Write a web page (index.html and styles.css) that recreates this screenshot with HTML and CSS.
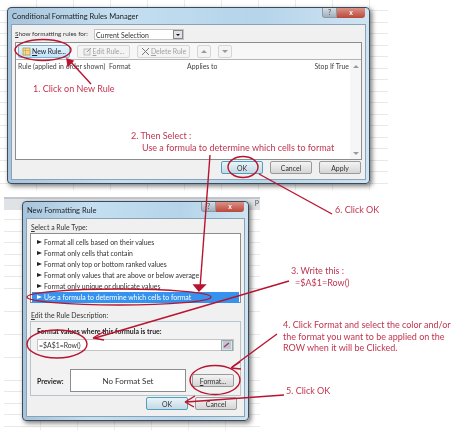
FILE: index.html
```html
<!DOCTYPE html>
<html lang="en">
<head>
  <meta charset="UTF-8">
  <title>Conditional Formatting</title>
  <link rel="stylesheet" href="styles.css">
</head>
<body>
  <div class="canvas">
    <div class="sheet sheet-top"></div>
    <div class="sheet sheet-bottom"><div class="col-bar"><span>P</span></div></div>

    <!-- Rules manager -->
    <div class="window manager">
      <div class="titlebar">
        <span class="title">Conditional Formatting Rules Manager</span>
        <div class="caption">
          <span class="help">?</span>
          <span class="close">x</span>
        </div>
      </div>
      <div class="client">
        <div class="show-row">
          <span class="show-label"><u>S</u>how formatting rules for:</span>
          <div class="select">
            <span>Current Selection</span>
            <i class="drop"></i>
          </div>
        </div>
        <div class="rules">
          <div class="toolbar">
            <button class="btn btn-hot">
              <svg width="9" height="9" viewBox="0 0 9 9"><rect x="1" y="1" width="7" height="7" fill="#f6dc8a" stroke="#b58d3a" stroke-width=".7"/><path d="M1 3.5h7M3.5 1v7" stroke="#c99f4c" stroke-width=".6"/></svg>
              <span><u>N</u>ew Rule...</span>
            </button>
            <button class="btn btn-off">
              <svg width="9" height="9" viewBox="0 0 9 9"><rect x="1" y="2" width="6" height="6" fill="#eee" stroke="#aaa" stroke-width=".7"/><path d="M4 5l4-4" stroke="#999"/></svg>
              <span><u>E</u>dit Rule...</span>
            </button>
            <button class="btn btn-off">
              <svg width="9" height="9" viewBox="0 0 9 9"><path d="M1 1l7 7M8 1L1 8" stroke="#777" stroke-width="1"/></svg>
              <span><u>D</u>elete Rule</span>
            </button>
            <button class="btn btn-off btn-arrow"><i class="tri tri-up"></i></button>
            <button class="btn btn-off btn-arrow"><i class="tri tri-down"></i></button>
          </div>
          <div class="rule-head">
            <span class="col-rule">Rule (applied in order shown)</span>
            <span class="col-format">Format</span>
            <span class="col-applies">Applies to</span>
            <span class="col-stop">Stop If True</span>
          </div>
          <div class="rule-body">
            <div class="scroll">
              <i class="tri tri-up"></i>
              <i class="tri tri-down"></i>
            </div>
          </div>
        </div>
        <div class="actions">
          <button class="push push-default">OK</button>
          <button class="push">Cancel</button>
          <button class="push">Apply</button>
        </div>
      </div>
    </div>

    <!-- New rule dialog -->
    <div class="window new-rule">
      <div class="titlebar">
        <span class="title">New Formatting Rule</span>
        <div class="caption">
          <span class="help">?</span>
          <span class="close">x</span>
        </div>
      </div>
      <div class="client">
        <div class="label"><u>S</u>elect a Rule Type:</div>
        <ul class="types">
          <li>Format all cells based on their values</li>
          <li>Format only cells that contain</li>
          <li>Format only top or bottom ranked values</li>
          <li>Format only values that are above or below average</li>
          <li>Format only unique or duplicate values</li>
          <li class="selected">Use a formula to determine which cells to format</li>
        </ul>
        <div class="label label-edit"><u>E</u>dit the Rule Description:</div>
        <div class="desc">
          <div class="formula-label">Format values where this formula is true:</div>
          <div class="formula">
            <span>=$A$1=Row()</span>
            <i class="ref"><svg width="8" height="8" viewBox="0 0 8 8"><rect width="8" height="8" fill="#b9c9d8"/><path d="M1 6l5-4" stroke="#b8344a" stroke-width="1.4"/></svg></i>
          </div>
          <div class="preview-row">
            <b>Preview:</b>
            <div class="preview">No Format Set</div>
            <button class="push"><u>F</u>ormat...</button>
          </div>
        </div>
        <div class="actions">
          <button class="push push-default">OK</button>
          <button class="push">Cancel</button>
        </div>
      </div>
    </div>

    <!-- Callouts drawn over the screenshot -->
    <svg class="marks" width="474" height="445" viewBox="0 0 474 445" fill="none" stroke="#b9142f" stroke-width="1.4">
      <ellipse cx="43" cy="50" rx="28" ry="10.5"/>
      <ellipse cx="243" cy="167" rx="15" ry="10.5"/>
      <ellipse cx="119" cy="297" rx="92" ry="8"/>
      <ellipse cx="57" cy="344" rx="30" ry="14"/>
      <ellipse cx="215" cy="380" rx="25" ry="14.5"/>
      <path d="M91 84L70 61"/>
      <path d="M67 59l1 7 5-5z" fill="#b9142f"/>
      <path d="M210 155L200 288"/>
      <path d="M199 291l-5-6 11 0z" fill="#b9142f"/>
      <path d="M259 174L332 214"/>
      <path d="M289 281L95 338"/>
      <path d="M93 338l12-7M93 338l11 2"/>
      <path d="M277 334L232 367"/>
      <path d="M231 368l9-6M231 368l10 1"/>
      <path d="M284 395L186 402"/>
      <path d="M185 402l10-6M185 402l9 5"/>
    </svg>

    <div class="note note-1">1. Click on New Rule</div>
    <div class="note note-2">2. Then Select :<br><span class="indent">Use a formula to determine which cells to format</span></div>
    <div class="note note-6">6. Click OK</div>
    <div class="note note-3">3. Write this :<br><span class="indent-small">=$A$1=Row()</span></div>
    <div class="note note-4">4. Click Format and select the color and/or<br>the format you want to be applied on the<br>ROW when it will be Clicked.</div>
    <div class="note note-5">5. Click OK</div>
  </div>
</body>
</html>
```

FILE: styles.css
```css
* {
  box-sizing: border-box;
  margin: 0;
  padding: 0;
}
body {
  background: white;
  font-family: 'Lato', 'Liberation Sans', sans-serif;
  font-size: 6.9px;
  color: #333;
}
button {
  font: inherit;
  color: inherit;
}
u {
  text-decoration: underline;
}
.canvas {
  position: relative;
  width: 474px;
  height: 445px;
  overflow: hidden;
  background: white;
  filter: blur(0.45px);
}

/* spreadsheet behind the windows */
.sheet {
  position: absolute;
  background-image:
    repeating-linear-gradient(to bottom, transparent 0, transparent 10.5px, #e6eae6 10.5px, #e6eae6 11.5px),
    repeating-linear-gradient(to right, transparent 0, transparent 36px, #e9ece9 36px, #e9ece9 37px);
}
.sheet-top {
  left: 0;
  top: 0;
  width: 388px;
  height: 190px;
}
.sheet-bottom {
  left: 4px;
  top: 197px;
  width: 256px;
  height: 233px;
}
.col-bar {
  height: 13px;
  background: #dfe2e6;
  border-top: 2px solid #c3c6ca;
  text-align: right;
  padding-right: 1px;
  color: #555;
  font-size: 7px;
}

/* windows */
.window {
  position: absolute;
  background: linear-gradient(to right, #a6c4dc, #c4dff1 30%, #b5d4ea 70%, #cfe4f2);
  border: 1px solid #3d4a57;
  border-radius: 4px;
  box-shadow: 2px 2px 5px rgba(0, 0, 0, 0.55);
  display: flex;
  flex-direction: column;
  padding: 0 3px 3px;
}
.manager {
  left: 7px;
  top: 7px;
  width: 363px;
  height: 177px;
}
.new-rule {
  left: 22px;
  top: 201px;
  width: 227px;
  height: 220px;
}
.titlebar {
  height: 16px;
  display: flex;
  align-items: center;
  justify-content: space-between;
  flex-shrink: 0;
}
.title {
  font-size: 7.5px;
  color: #222;
  padding-left: 1px;
}
.caption {
  display: flex;
  align-self: flex-start;
  margin-right: 1px;
  height: 10px;
  line-height: 9px;
  text-align: center;
}
.help {
  width: 15px;
  background: linear-gradient(#d5dde4, #9fb0bd);
  border: 1px solid #8b9aa6;
  border-top: none;
  border-radius: 0 0 0 3px;
  color: #445;
}
.close {
  width: 28px;
  background: linear-gradient(#dc9186, #b9473a);
  border-radius: 0 0 3px 0;
  color: white;
  font-weight: bold;
}
.client {
  flex: 1;
  background: #f0f0f0;
  border: 1px solid #8aa2b6;
  display: flex;
  flex-direction: column;
  padding: 0 3px;
}

/* manager body */
.show-row {
  display: flex;
  align-items: center;
  height: 17px;
  flex-shrink: 0;
}
.show-label {
  width: 79px;
  font-size: 6.4px;
  white-space: nowrap;
}
.select {
  width: 90px;
  height: 11px;
  background: white;
  border: 1px solid #c4c4c4;
  display: flex;
  align-items: center;
  justify-content: space-between;
  padding-left: 1px;
  margin-top: 2px;
}
.drop {
  width: 10px;
  height: 9px;
  background: #dfe3e8;
  border: 1px solid #888;
  position: relative;
}
.drop::after {
  content: "";
  position: absolute;
  left: 2px;
  top: 3px;
  border: 2px solid transparent;
  border-top: 2px solid #111;
}
.rules {
  height: 118px;
  background: white;
  border: 1px solid #8d8d8d;
  display: flex;
  flex-direction: column;
  flex-shrink: 0;
}
.toolbar {
  height: 17px;
  background: #f7f7f7;
  border-bottom: 1px solid #b5b5b5;
  display: flex;
  align-items: center;
  padding-left: 2px;
  gap: 7px;
  flex-shrink: 0;
}
.btn {
  height: 13px;
  width: 53px;
  display: flex;
  align-items: center;
  justify-content: center;
  gap: 1px;
  border: 1px solid #d6d6d6;
  border-radius: 2px;
  background: #f4f4f4;
}
.btn-hot {
  width: 52px;
  color: #223;
  background: linear-gradient(#e5f4fc, #bfe3f6);
  border-color: #7fb4d2;
}
.btn-off {
  color: #a2a2a2;
}
.btn-arrow {
  width: 14px;
}
.tri {
  display: block;
  width: 0;
  height: 0;
  border-left: 3px solid transparent;
  border-right: 3px solid transparent;
}
.tri-up {
  border-bottom: 3px solid #9a9a9a;
}
.tri-down {
  border-top: 3px solid #9a9a9a;
}
.rule-head {
  height: 12px;
  display: flex;
  align-items: center;
  flex-shrink: 0;
  padding-left: 2px;
  color: #444;
  margin-right: 11px;
  white-space: nowrap;
}
.col-rule { width: 91px; }
.col-format { width: 78px; }
.col-applies { flex: 1; }
.col-stop { padding-right: 1px; }
.rule-body {
  flex: 1;
  position: relative;
}
.scroll {
  position: absolute;
  right: 0;
  top: -12px;
  bottom: 0;
  width: 11px;
  background: #f6f6f6;
  display: flex;
  flex-direction: column;
  align-items: center;
  justify-content: space-between;
  padding: 5px 0 4px;
}
.actions {
  display: flex;
  justify-content: flex-end;
  gap: 7px;
  margin-top: 1px;
  padding-right: 1px;
}
.push {
  width: 42px;
  height: 13px;
  background: linear-gradient(#f4f4f4, #d5d5d5);
  border: 1px solid #9a9a9a;
  border-radius: 2px;
  color: #333;
}
.push-default {
  border-color: #4f9fc0;
  background: linear-gradient(#e8f4fa, #c6d9e3);
}

/* new rule body */
.label {
  height: 14px;
  line-height: 17px;
  flex-shrink: 0;
  padding-left: 1px;
}
.types {
  list-style: none;
  height: 70px;
  background: white;
  border: 1px solid #8d8d8d;
  padding: 3px 1px 0;
  flex-shrink: 0;
}
.types li {
  height: 11px;
  line-height: 11px;
  padding-left: 12px;
  position: relative;
  white-space: nowrap;
}
.types li::before {
  content: "";
  position: absolute;
  left: 5px;
  top: 3px;
  border-left: 5px solid #222;
  border-top: 2.5px solid transparent;
  border-bottom: 2.5px solid transparent;
}
.types li.selected {
  background: #3593ef;
  color: white;
}
.types li.selected::before {
  border-left-color: white;
}
.label-edit {
  height: 18px;
  line-height: 24px;
}
.desc {
  height: 75px;
  border: 1px solid #b9c3cb;
  background: #f2f2f2;
  padding: 4px 6px 0;
  flex-shrink: 0;
}
.formula-label {
  font-weight: bold;
  height: 11px;
  line-height: 11px;
  color: #222;
}
.formula {
  height: 12px;
  margin-top: 2px;
  background: white;
  border: 1px solid #c4c4c4;
  display: flex;
  align-items: center;
  justify-content: space-between;
  padding-left: 1px;
}
.ref {
  width: 12px;
  height: 11px;
  background: #dde4ea;
  border: 1px solid #9aa;
  display: flex;
  align-items: center;
  justify-content: center;
}
.preview-row {
  display: flex;
  align-items: center;
  margin-top: 18px;
}
.preview-row b {
  width: 33px;
  color: #222;
}
.preview {
  width: 116px;
  height: 23px;
  margin-right: 6px;
  background: white;
  border: 1px solid #8d8d8d;
  display: flex;
  align-items: center;
  justify-content: center;
  font-size: 8px;
}
.new-rule .actions {
  padding-right: 4px;
}

/* red callouts */
.marks {
  position: absolute;
  left: 0;
  top: 0;
}
.note {
  position: absolute;
  color: #c0354f;
  font-family: 'Lato', 'Open Sans', sans-serif;
  font-size: 9px;
  line-height: 11.7px;
  white-space: nowrap;
}
.note-1 { left: 33px; top: 83px; }
.note-2 { left: 131px; top: 130px; }
.note-3 { left: 291px; top: 265px; }
.note-4 { left: 283px; top: 319px; }
.note-5 { left: 286px; top: 385px; }
.note-6 { left: 335px; top: 204px; }
.indent { padding-left: 11px; }
.indent-small { padding-left: 4px; }
```
